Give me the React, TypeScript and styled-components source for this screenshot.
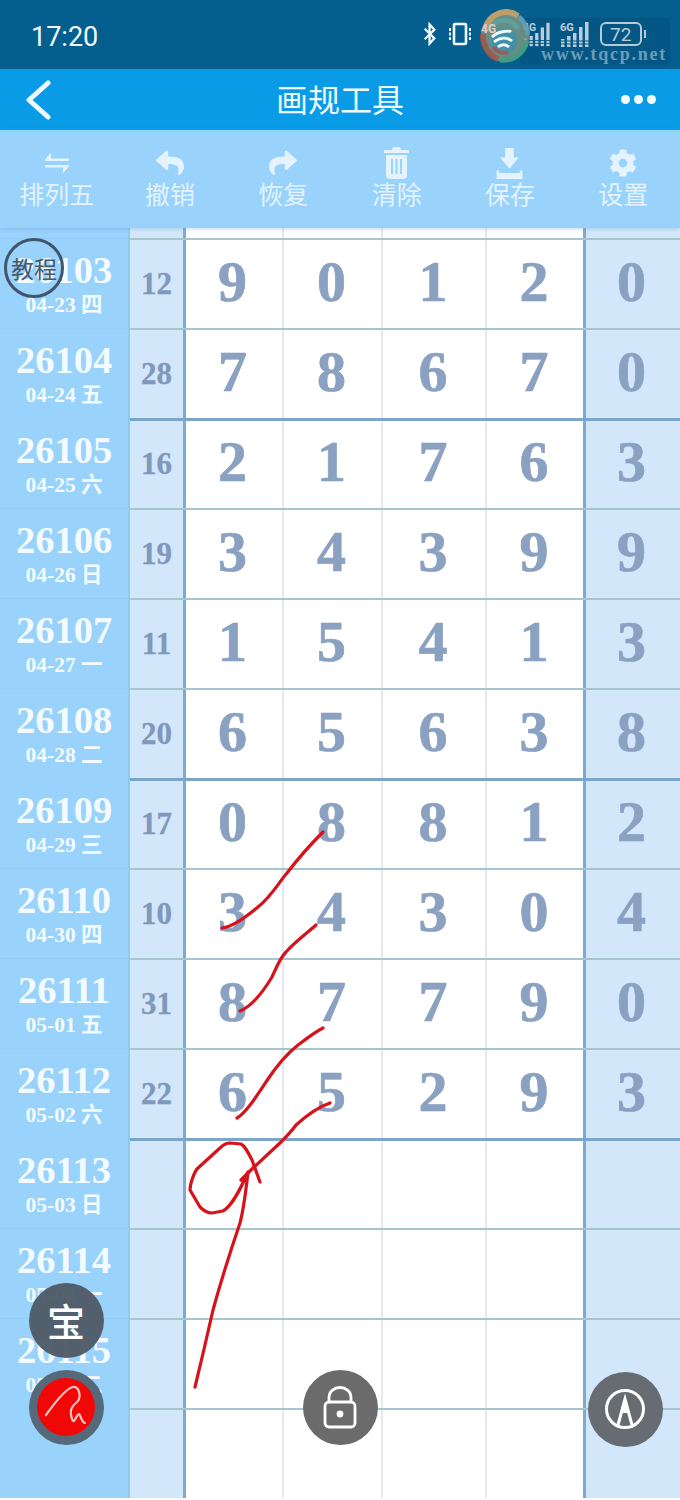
import React from 'react';
import styled, { createGlobalStyle } from 'styled-components';
import { FaCog, FaReply, FaShare } from 'react-icons/fa';

const SERIF = '"Liberation Serif", "Noto Sans CJK SC", serif';
const CJK = '"Noto Sans CJK SC", "Noto Sans", sans-serif';
const COLUMNS = '130px 53px 99px 99px 104px 98px 97px';

const GlobalStyle = createGlobalStyle`
  html, body {
    margin: 0;
    padding: 0;
    background: #fff;
  }
`;

const Screen = styled.div`
  position: relative;
  width: 680px;
  height: 1500px;
  overflow: hidden;
  font-family: ${CJK};
`;

const StatusBar = styled.div`
  height: 69px;
  box-sizing: border-box;
  padding: 4px 34px 0 31px;
  display: flex;
  align-items: center;
  justify-content: space-between;
  background: #045f8e;
  color: #f0f8fc;
`;

const Clock = styled.span`
  font-family: Roboto, sans-serif;
  font-size: 27px;
`;

const StatusIcons = styled.div`
  display: flex;
  align-items: center;
  margin-top: -6px;
`;

const StatusSlot = styled.div<{ $gap?: number }>`
  display: flex;
  margin-left: ${(p) => p.$gap ?? 0}px;
`;

const WatermarkBox = styled.div`
  position: absolute;
  top: 18px;
  left: 520px;
  width: 150px;
  height: 47px;
  background: rgba(4, 60, 100, 0.22);
`;

const WatermarkText = styled.span`
  position: absolute;
  top: 44px;
  left: 541px;
  font-family: "Liberation Serif", serif;
  font-size: 18px;
  font-weight: bold;
  letter-spacing: 1.75px;
  color: #6d9db6;
`;

const WatermarkLogo = styled.svg`
  position: absolute;
  top: 9px;
  left: 480px;
`;

const NavBar = styled.div`
  height: 61px;
  box-sizing: border-box;
  padding: 0 24px;
  display: grid;
  grid-template-columns: 1fr auto 1fr;
  align-items: center;
  background: #0a9be6;
  color: #eefaff;
`;

const NavTitle = styled.div`
  font-size: 32px;
  line-height: 40px;
  margin-top: -4px;
`;

const Dots = styled.div`
  justify-self: end;
  display: flex;
  gap: 4px;
`;

const Dot = styled.i`
  width: 9px;
  height: 9px;
  border-radius: 50%;
  background: #f2fbff;
`;

const Toolbar = styled.div`
  height: 98px;
  box-sizing: border-box;
  padding-top: 13px;
  display: flex;
  align-items: flex-start;
  background: #99d2fb;
  border-top: 3px solid #8fd4fb;
  box-shadow: 0 1px 4px rgba(90, 150, 200, 0.35);
  position: relative;
  z-index: 1;
`;

const ToolItem = styled.div`
  flex: 1;
  display: flex;
  flex-direction: column;
  align-items: center;
  color: #e4f3fe;
`;

const ToolIcon = styled.div`
  height: 34px;
  display: flex;
  align-items: center;
  justify-content: center;
`;

const ToolLabel = styled.span`
  font-size: 25px;
  line-height: 30px;
  margin-top: -2px;
`;

const Row = styled.div<{ $height: number }>`
  display: grid;
  grid-template-columns: ${COLUMNS};
  height: ${(p) => p.$height}px;
`;

const IssueCell = styled.div<{ $line: number }>`
  display: flex;
  flex-direction: column;
  align-items: center;
  padding-right: 2px;
  background: #99d2fb;
  color: #f4fbff;
  font-family: ${SERIF};
  font-weight: bold;
  box-shadow: inset -2px 0 0 #8fc8f3
    ${(p) => (p.$line ? ', inset 0 1px 0 #93ccf6' : '')};
`;

const IssueNumber = styled.span`
  font-size: 38.5px;
  line-height: 38px;
  margin-top: 13px;
`;

const IssueDate = styled.span`
  font-size: 21.5px;
  line-height: 24px;
  margin-top: 4px;
  white-space: pre;
`;

const lineShadow = (line: number) => {
  if (line === 2) return 'inset 0 3px 0 #7ca6c8';
  if (line === 1) return 'inset 0 2px 0 #a6c5cd';
  return '';
};

const CountCell = styled.div<{ $line: number }>`
  display: flex;
  align-items: center;
  justify-content: center;
  padding-top: 2px;
  background: #d3e7fa;
  color: #7f98bc;
  font-family: ${SERIF};
  font-weight: bold;
  font-size: 31px;
  -webkit-text-stroke: 0.3px #7f98bc;
  box-shadow: ${(p) => lineShadow(p.$line) || 'none'};
`;

const NumberCell = styled.div<{ $line: number; $edge: 'thick' | 'thin' | 'none'; $tail?: boolean }>`
  display: flex;
  align-items: center;
  justify-content: center;
  padding-bottom: 4px;
  background: ${(p) => (p.$tail ? '#d3e7fa' : '#fff')};
  color: #8aa1c1;
  font-family: ${SERIF};
  font-weight: bold;
  font-size: 58px;
  -webkit-text-stroke: 0.7px #8aa1c1;
  box-shadow: ${(p) =>
    [
      lineShadow(p.$line),
      p.$edge === 'thick' ? 'inset 3px 0 0 #7caad3' : '',
      p.$edge === 'thin' ? 'inset 2px 0 0 #e3e9ee' : '',
    ]
      .filter(Boolean)
      .join(', ') || 'none'};
`;

const Ink = styled.svg`
  position: absolute;
  top: 0;
  left: 0;
  pointer-events: none;
`;

const TutorialBadge = styled.div`
  position: absolute;
  top: 238px;
  left: 4px;
  width: 60px;
  height: 60px;
  box-sizing: border-box;
  border: 3px solid #42566b;
  border-radius: 50%;
  display: flex;
  align-items: center;
  justify-content: center;
  color: #48586a;
  font-size: 23px;
  white-space: nowrap;
`;

const FloatButton = styled.div<{ $x: number; $y: number; $bg: string }>`
  position: absolute;
  left: ${(p) => p.$x - 37.5}px;
  top: ${(p) => p.$y - 37.5}px;
  width: 75px;
  height: 75px;
  border-radius: 50%;
  display: flex;
  align-items: center;
  justify-content: center;
  background: ${(p) => p.$bg};
  color: #fff;
`;

const TreasureGlyph = styled.span`
  font-size: 38px;
  font-weight: 500;
  line-height: 1;
`;

const RedDisc = styled.div`
  width: 58px;
  height: 58px;
  border-radius: 50%;
  background: #f20707;
  display: flex;
  align-items: center;
  justify-content: center;
`;

type RowData = { issue: string; date: string; week: string; count?: number; nums?: number[]; line: number };

const rows: RowData[] = [
  { issue: '26103', date: '04-23', week: '四', count: 12, nums: [9, 0, 1, 2, 0], line: 1 },
  { issue: '26104', date: '04-24', week: '五', count: 28, nums: [7, 8, 6, 7, 0], line: 1 },
  { issue: '26105', date: '04-25', week: '六', count: 16, nums: [2, 1, 7, 6, 3], line: 2 },
  { issue: '26106', date: '04-26', week: '日', count: 19, nums: [3, 4, 3, 9, 9], line: 1 },
  { issue: '26107', date: '04-27', week: '一', count: 11, nums: [1, 5, 4, 1, 3], line: 1 },
  { issue: '26108', date: '04-28', week: '二', count: 20, nums: [6, 5, 6, 3, 8], line: 1 },
  { issue: '26109', date: '04-29', week: '三', count: 17, nums: [0, 8, 8, 1, 2], line: 2 },
  { issue: '26110', date: '04-30', week: '四', count: 10, nums: [3, 4, 3, 0, 4], line: 1 },
  { issue: '26111', date: '05-01', week: '五', count: 31, nums: [8, 7, 7, 9, 0], line: 1 },
  { issue: '26112', date: '05-02', week: '六', count: 22, nums: [6, 5, 2, 9, 3], line: 1 },
  { issue: '26113', date: '05-03', week: '日', line: 2 },
  { issue: '26114', date: '05-04', week: '一', line: 1 },
  { issue: '26115', date: '05-05', week: '二', line: 1 },
];

const EDGES: ('thick' | 'thin' | 'none')[] = ['thick', 'thin', 'thin', 'thin', 'thick'];

const strokes = [
  'M222 928 C232 927 245 918 258 907 C272 896 279 882 287 873 C297 860 310 845 323 832',
  'M240 1011 C252 1006 263 992 272 977 C277 966 280 958 286 952 C296 941 306 934 316 925',
  'M237 1118 C246 1113 256 1097 268 1079 C278 1064 288 1053 298 1045 C306 1039 315 1032 323 1028',
  'M330 1103 C318 1107 306 1116 296 1125 C291 1132 286 1137 281 1142 L253 1168 L241 1180',
  'M260 1182 L252 1160 C248 1152 245 1146 241 1144 L230 1143 C226 1143 223 1145 220 1148 L198 1168 C194 1172 190 1184 190 1190 L200 1207 C204 1211 208 1213 212 1213 L223 1211 C232 1206 240 1190 248 1172 C246 1190 244 1208 240 1223 Q224 1270 213 1310 Q204 1350 195 1387',
];

const Swap = () => (
  <svg width="26" height="22" viewBox="0 0 26 22" fill="currentColor">
    <path d="M7 1 L1 7.5 V9 H25 V6.5 H7 Z" />
    <path d="M19 21 L25 14.5 V13 H1 V15.5 H19 Z" />
  </svg>
);

const Trash = () => (
  <svg width="25" height="32" viewBox="0 0 25 32" fill="currentColor">
    <path d="M8 3 C8 1 9 0 10.5 0 H14.5 C16 0 17 1 17 3 H24 A1 1 0 0 1 25 4 V6 H0 V4 A1 1 0 0 1 1 3 Z" />
    <path fillRule="evenodd" d="M2 8 H23 V28 C23 30.5 21.5 32 19 32 H6 C3.500 32 2 30.5 2 28 Z M7 12 V27 H9 V12 Z M11.500 12 V27 H13.500 V12 Z M16 12 V27 H18 V12 Z" />
  </svg>
);

const Download = () => (
  <svg width="29" height="31" viewBox="0 0 30 36" fill="currentColor">
    <path d="M10 0 H20 V11 H26 L15 24 L4 11 H10 Z" />
    <path d="M0 26 H3 V29 H27 V26 H30 V36 H0 Z" />
  </svg>
);

const tools = [
  { label: '排列五', icon: <Swap /> },
  { label: '撤销', icon: <FaReply size={28} /> },
  { label: '恢复', icon: <FaShare size={28} /> },
  { label: '清除', icon: <Trash /> },
  { label: '保存', icon: <Download /> },
  { label: '设置', icon: <FaCog size={28} /> },
];

const SignalBars = ({ label, width }: { label: string; width: number }) => (
  <svg width={width} height="26" viewBox="0 0 30 26" fill="#eef7fb">
    <text x="0" y="10" fontSize="11" fontFamily="Roboto, sans-serif" fontWeight="bold">{label}</text>
    <rect x="1" y="18" width="3.500" height="8" />
    <rect x="7" y="15" width="3.500" height="11" />
    <rect x="13" y="12" width="3.500" height="14" />
    <rect x="19" y="6" width="3.500" height="20" />
    <rect x="25" y="1" width="3.500" height="25" />
    <path d="M0 20 H30 M0 23 H30" stroke="#045f8e" strokeWidth="1" />
  </svg>
);

const StatusGlyphs = () => (
  <StatusIcons>
    <StatusSlot>
      <svg width="14" height="24" viewBox="0 0 16 26" fill="none" stroke="#f2f9fc" strokeWidth="2.6">
        <path d="M2 7 L13 18 L7.500 24 V2 L13 8 L2 19" />
      </svg>
    </StatusSlot>
    <StatusSlot $gap={10}>
      <svg width="26" height="24" viewBox="0 0 26 24" fill="none" stroke="#f2f9fc" strokeWidth="2">
        <rect x="7" y="2" width="12" height="20" rx="1" strokeWidth="2.600" />
        <path d="M3 6 V18 M23 6 V18" strokeDasharray="3 1.500" />
      </svg>
    </StatusSlot>
    <StatusSlot $gap={50}>
      <SignalBars label="4G" width={28} />
    </StatusSlot>
    <StatusSlot $gap={9}>
      <SignalBars label="6G" width={30} />
    </StatusSlot>
    <StatusSlot $gap={10}>
      <svg width="46" height="24" viewBox="0 0 46 24" fill="none" stroke="#e8f3f8" strokeWidth="2">
        <rect x="1" y="1" width="40" height="22" rx="5" />
        <rect x="44" y="8" width="2" height="8" fill="#e8f3f8" stroke="none" />
        <text x="10" y="19" fontSize="19" fill="#e8f3f8" stroke="none" fontFamily="Roboto, sans-serif">72</text>
      </svg>
    </StatusSlot>
  </StatusIcons>
);

const Watermark = () => (
  <>
    <WatermarkBox />
    <WatermarkLogo width="50" height="54" viewBox="0 0 50 54" fill="none">
      <ellipse cx="25" cy="27" rx="24" ry="26" fill="#7f9a82" opacity="0.8" />
      <path d="M5 20 A22 24 0 0 1 38 7" stroke="#c4a268" strokeWidth="6" opacity="0.9" />
      <path d="M3 25 A22 24 0 0 0 18 50" stroke="#a65146" strokeWidth="6" opacity="0.8" />
      <path d="M20 51 A24 26 0 0 0 47 32" stroke="#3f9c86" strokeWidth="5" opacity="0.9" />
      <path d="M39 8 A24 26 0 0 1 48 26" stroke="#5f9fb8" strokeWidth="5" opacity="0.85" />
      <path d="M8 22 A17 18 0 0 1 38 20" stroke="#5fa6a6" strokeWidth="5" opacity="0.7" />
      <circle cx="24" cy="32" r="13" fill="#3b93ad" opacity="0.85" />
      <path d="M28 43 A13 13 0 0 1 13 38" stroke="#a8524d" strokeWidth="4" opacity="0.8" />
      <path d="M12 28 C19 21 30 22 31 23 M14 33 C20 28 27 28 32 32 M18 38 C21 35 26 35 29 38" stroke="#f4fafc" strokeWidth="2.800" />
      <text x="1" y="24" fontSize="12" fontWeight="bold" fontFamily="Roboto, sans-serif" fill="#e7c9c0">4G</text>
    </WatermarkLogo>
    <WatermarkText>www.tqcp.net</WatermarkText>
  </>
);

const DataRow = ({ row }: { row: RowData }) => (
  <Row $height={90}>
    <IssueCell $line={row.line > 1 ? 0 : 1}>
      <IssueNumber>{row.issue}</IssueNumber>
      <IssueDate>{`${row.date} ${row.week}`}</IssueDate>
    </IssueCell>
    <CountCell $line={row.line}>{row.count}</CountCell>
    {EDGES.map((edge, i) => (
      <NumberCell key={i} $line={row.line} $edge={edge} $tail={i === 4}>
        {row.nums ? row.nums[i] : ''}
      </NumberCell>
    ))}
  </Row>
);

const BlankRow = ({ height, line }: { height: number; line: number }) => (
  <Row $height={height}>
    <IssueCell $line={0} />
    <CountCell $line={line} />
    {EDGES.map((edge, i) => (
      <NumberCell key={i} $line={line} $edge={edge} $tail={i === 4} />
    ))}
  </Row>
);

export default function App() {
  return (
    <Screen>
      <GlobalStyle />
      <StatusBar>
        <Clock>17:20</Clock>
        <StatusGlyphs />
      </StatusBar>
      <Watermark />
      <NavBar>
        <svg width="28" height="40" viewBox="0 0 28 40" fill="none" stroke="#eefaff" strokeWidth="5" strokeLinecap="round" strokeLinejoin="round">
          <path d="M24 3 L5 20 L24 37" />
        </svg>
        <NavTitle>画规工具</NavTitle>
        <Dots>
          <Dot />
          <Dot />
          <Dot />
        </Dots>
      </NavBar>
      <Toolbar>
        {tools.map((tool) => (
          <ToolItem key={tool.label}>
            <ToolIcon>{tool.icon}</ToolIcon>
            <ToolLabel>{tool.label}</ToolLabel>
          </ToolItem>
        ))}
      </Toolbar>
      <BlankRow height={10} line={0} />
      {rows.map((row) => (
        <DataRow key={row.issue} row={row} />
      ))}
      <BlankRow height={90} line={1} />

      <Ink width="680" height="1500" fill="none" stroke="#d6121b" strokeWidth="3.200" strokeLinecap="round" strokeLinejoin="round">
        {strokes.map((d) => (
          <path key={d} d={d} />
        ))}
      </Ink>

      <TutorialBadge>教程</TutorialBadge>

      <FloatButton $x={66} $y={1320} $bg="rgba(80, 92, 104, 0.97)">
        <TreasureGlyph>宝</TreasureGlyph>
      </FloatButton>
      <FloatButton $x={66} $y={1407} $bg="#56697b">
        <RedDisc>
          <svg width="44" height="44" viewBox="0 0 44 44" fill="none" stroke="#ffc4c4" strokeWidth="2.200" strokeLinecap="round" strokeLinejoin="round">
            <path d="M2 30 C8 22 20 4 29 2 C35 1 38 12 33 17 C28 21 25 25 28 34 C30 41 33 28 35 29 C37 30 37 37 41 38" />
          </svg>
        </RedDisc>
      </FloatButton>
      <FloatButton $x={340} $y={1407} $bg="#6b6b6b">
        <svg width="36" height="44" viewBox="0 0 36 44" fill="none" stroke="#fff" strokeWidth="2.800">
          <path d="M7 18 V13 C7 -1 29 -1 29 13 V18" />
          <rect x="3" y="17" width="30" height="25" rx="4" />
          <circle cx="18" cy="29" r="3.400" fill="#fff" stroke="none" />
        </svg>
      </FloatButton>
      <FloatButton $x={625} $y={1409} $bg="#666c71">
        <svg width="42" height="42" viewBox="0 0 42 42" fill="none" stroke="#fff" strokeWidth="3">
          <circle cx="21" cy="21" r="18.500" />
          <path d="M14 37 L21 11 L28 37" />
          <path d="M21 8 L26 25 H16 Z" fill="#fff" stroke="none" />
        </svg>
      </FloatButton>
    </Screen>
  );
}
